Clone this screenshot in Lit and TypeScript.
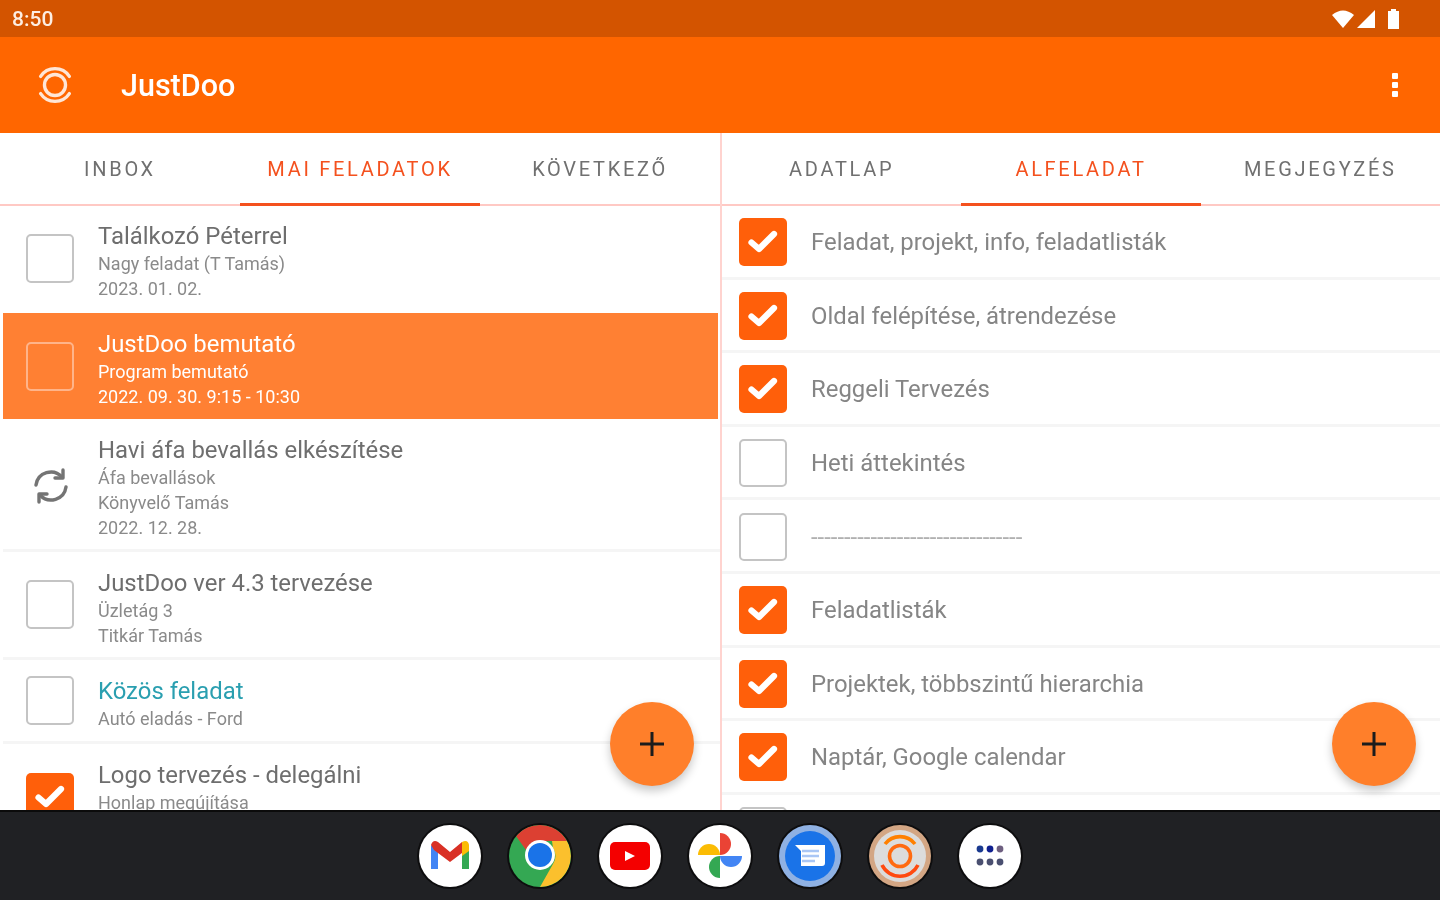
import { LitElement, html, css, svg } from "lit";
import { customElement } from "lit/decorators.js";

type Left = { title: string; lines: string[]; h: number; kind: "empty" | "sync" | "checked"; sel?: boolean; teal?: boolean };

const LEFT: Left[] = [
  { title: "Találkozó Péterrel", lines: ["Nagy feladat (T Tamás)", "2023. 01. 02."], h: 107, kind: "empty" },
  { title: "JustDoo bemutató", lines: ["Program bemutató", "2022. 09. 30. 9:15 - 10:30"], h: 106, kind: "empty", sel: true },
  { title: "Havi áfa bevallás elkészítése", lines: ["Áfa bevallások", "Könyvelő Tamás", "2022. 12. 28."], h: 133, kind: "sync" },
  { title: "JustDoo ver 4.3 tervezése", lines: ["Üzletág 3", "Titkár Tamás"], h: 108, kind: "empty" },
  { title: "Közös feladat", lines: ["Autó eladás - Ford"], h: 84, kind: "empty", teal: true },
  { title: "Logo tervezés - delegálni", lines: ["Honlap megújítása", "\u00a0"], h: 108, kind: "checked" },
];

const RIGHT: { t: string; c: boolean; dash?: boolean }[] = [
  { t: "Feladat, projekt, info, feladatlisták", c: true },
  { t: "Oldal felépítése, átrendezése", c: true },
  { t: "Reggeli Tervezés", c: true },
  { t: "Heti áttekintés", c: false },
  { t: "--------------------------------", c: false, dash: true },
  { t: "Feladatlisták", c: true },
  { t: "Projektek, többszintű hierarchia", c: true },
  { t: "Naptár, Google calendar", c: true },
  { t: "", c: false },
];

const checkMark = svg`<path d="M12.5 24.5 L20 31 L35 16" fill="none" stroke="#fff" stroke-width="6.2" stroke-linecap="round" stroke-linejoin="round"/>`;

const plus = svg`<path d="M14 2V26M2 14H26" stroke="#1c1c1c" stroke-width="3"/>`;

@customElement("app-root")
export class AppRoot extends LitElement {
  static styles = css`
    :host { display: flex; flex-direction: column; width: 1440px; height: 900px; overflow: hidden; background: #fff; font-family: Roboto, "Liberation Sans", sans-serif; color: #6f6f6f; filter: blur(0.6px); }
    .status { height: 37px; flex: none; background: #d35400; display: flex; align-items: center; justify-content: space-between; padding: 0 40px 0 12px; color: #fdeee2; font-size: 21px; font-weight: 500; }
    .status-icons { display: flex; align-items: center; gap: 1px; }
    .battery { margin-left: 10px; }
    .appbar { height: 96px; flex: none; background: #ff6600; display: flex; align-items: center; color: #fff; padding: 0 42px 0 32px; }
    .appbar .logo { width: 46px; height: 46px; }
    .appbar .name { margin-left: 43px; font-size: 30.5px; font-weight: 500; flex: 1; }
    .dots { display: flex; flex-direction: column; gap: 3.5px; }
    .dots i { width: 6px; height: 5.5px; background: #fff; border-radius: 1px; }
    .main { flex: 1; min-height: 0; display: grid; grid-template-columns: 720px 720px; position: relative; }
    .pane { position: relative; overflow: hidden; display: flex; flex-direction: column; }
    .pane.right { border-left: 2px solid #ffd3cf; }
    .tabs { display: flex; height: 73px; flex: none; border-bottom: 2px solid #ffc9c4; box-sizing: border-box; }
    .tab { flex: 1; display: flex; align-items: center; justify-content: center; font-size: 20px; letter-spacing: 2.7px; color: #707070; margin-bottom: -2px; border-bottom: 3px solid transparent; box-sizing: border-box; padding-top: 2px; }
    .tab.on { color: #f4511e; border-bottom-color: #f4511e; }
    .left-row { display: flex; align-items: center; flex: none; box-sizing: border-box; border-bottom: 3px solid #f5f5f5; margin-left: 3px; }
    .left-row:has(+ .sel) { border-bottom-color: transparent; }
    .left-row.sel { background: #ff8033; color: #fff; border-bottom: 0; margin-right: 2px; }
    .left-row.sel .sub, .left-row.sel .title { color: #fff; }
    .left-row.sel .box { border-color: #ffb48a; }
    .mark { width: 48px; height: 48px; margin-left: 23px; flex: none; display: flex; align-items: center; justify-content: center; }
    .left-row .box { height: 49px; }
    .left-row .box.checked { height: 48px; }
    .box { width: 48px; height: 48px; flex: none; box-sizing: border-box; border: 2px solid #c4c4c4; border-radius: 5px; }
    .box.checked { background: #ff5f0a; border: 0; }
    .box svg { display: block; width: 48px; height: 48px; }
    .sync { margin: 4px 0 0 2px; }
    .body { margin-left: 24px; padding-top: 6px; display: flex; flex-direction: column; }
    .title { font-size: 23.9px; line-height: 30px; color: #6e6e6e; }
    .title.teal { color: #2a9fb0; }
    .sub { font-size: 18px; line-height: 25px; color: #8a8a8a; }
    .right-row { height: 73.6px; flex: none; display: flex; align-items: center; box-sizing: border-box; border-bottom: 3px solid #f5f5f5; padding: 2px 0 0 17px; }
    .right-row span { margin-left: 24px; font-size: 23.9px; color: #858585; }
    .right-row span.dash { color: #b0b0b0; }
    .right-row .mark { margin-left: 0; }
    .fab { position: absolute; top: 569px; width: 84px; height: 84px; border-radius: 50%; background: #ff7f2a; box-shadow: 0 5px 10px rgba(0,0,0,.22); display: flex; align-items: center; justify-content: center; }
    .fab svg { width: 28px; height: 28px; }
    .fab.a { left: 610px; }
    .fab.b { left: 1332px; }
    .dock { height: 90px; flex: none; background: #202124; border-top: 2px solid #0b0b0b; box-sizing: border-box; display: flex; align-items: center; justify-content: center; gap: 28px; }
    .app { width: 62px; height: 62px; border-radius: 50%; flex: none; background: #fff; box-shadow: 0 0 0 2px #0d0d0e; display: block; }
  `;

  private box(kind: string) {
    if (kind === "sync")
      return html`<svg class="sync" width="36" height="36" viewBox="0 0 36 36" fill="none" stroke="#747474" stroke-width="3.4" stroke-linecap="round" stroke-linejoin="round"><path d="M3 17A15 15 0 0 1 29 9"/><path d="M30 2V10H22"/><path d="M33 19A15 15 0 0 1 7 27"/><path d="M6 34V26H14"/></svg>`;
    if (kind === "checked") return html`<div class="box checked"><svg viewBox="0 0 48 48">${checkMark}</svg></div>`;
    return html`<div class="box"></div>`;
  }

  private tabs(names: string[]) {
    return html`<div class="tabs">${names.map((n, i) => html`<div class="tab ${i === 1 ? "on" : ""}">${n}</div>`)}</div>`;
  }

  render() {
    return html`
      <div class="status">
        <span>8:50</span>
        <div class="status-icons">
          <svg width="24" height="20" viewBox="0 0 24 20"><path d="M1 6 Q12 -3 23 6 L12 19Z" fill="#fff"/></svg>
          <svg width="20" height="20" viewBox="0 0 20 20"><path d="M19 1V19H1Z" fill="#fff"/></svg>
          <svg class="battery" width="13" height="22" viewBox="0 0 13 22"><path d="M4 1h5v2h3v18H1V3h3z" fill="#fff"/></svg>
        </div>
      </div>
      <div class="appbar">
        <svg class="logo" viewBox="0 0 48 48">
          <path d="M9 15 A18 18 0 0 1 39 15" fill="none" stroke="#ffe6d6" stroke-width="3.5" stroke-linecap="round"/>
          <path d="M9 33 A18 18 0 0 0 39 33" fill="none" stroke="#ffe6d6" stroke-width="3.5" stroke-linecap="round"/>
          <circle cx="24" cy="24" r="11" fill="none" stroke="#ffe6d6" stroke-width="3.5"/>
        </svg>
        <div class="name">JustDoo</div>
        <div class="dots"><i></i><i></i><i></i></div>
      </div>
      <div class="main">
        <section class="pane">
          ${this.tabs(["INBOX", "MAI FELADATOK", "KÖVETKEZŐ"])}
          ${LEFT.map((r) => html`
            <div class="left-row ${r.sel ? "sel" : ""}" style="height:${r.h}px">
              <div class="mark">${this.box(r.kind)}</div>
              <div class="body">
                <div class="title ${r.teal ? "teal" : ""}">${r.title}</div>
                ${r.lines.map((l) => html`<div class="sub">${l}</div>`)}
              </div>
            </div>`)}
        </section>
        <section class="pane right">
          ${this.tabs(["ADATLAP", "ALFELADAT", "MEGJEGYZÉS"])}
          ${RIGHT.map((r) => html`
            <div class="right-row">
              <div class="mark">${this.box(r.c ? "checked" : "empty")}</div>
              <span class="${r.dash ? "dash" : ""}">${r.t}</span>
            </div>`)}
        </section>
        <div class="fab a"><svg viewBox="0 0 28 28">${plus}</svg></div>
        <div class="fab b"><svg viewBox="0 0 28 28">${plus}</svg></div>
      </div>
      <div class="dock">
        <svg class="app" viewBox="0 0 62 62">
          <path d="M12 20 V44 H19 V27Z" fill="#4285f4"/><path d="M50 20 V44 H43 V27Z" fill="#34a853"/>
          <path d="M12 20 Q14 14 19 17 L31 27 L43 17 L47 25 L31 37 L15 25Z" fill="#d93025"/>
          <path d="M43 17 Q49 14 50 20 V26 L43 31Z" fill="#fbbc04"/>
        </svg>
        <svg class="app" style="background:#34a853" viewBox="0 0 62 62">
          <path d="M31 0A31 31 0 0 1 58 16H31A15 15 0 0 0 17 25L7 11A31 31 0 0 1 31 0Z" fill="#dc4032"/>
          <path d="M58 16A31 31 0 0 1 31 62L44 39A15 15 0 0 0 44 23L43 16Z" fill="#fbc02d"/>
          <circle cx="31" cy="30" r="15" fill="#fff"/><circle cx="31" cy="30" r="12" fill="#1a73e8"/>
        </svg>
        <svg class="app" viewBox="0 0 62 62">
          <rect x="11" y="17" width="40" height="28" rx="5" fill="#f40000"/><path d="M26 26L36 31L26 36Z" fill="#fff"/>
        </svg>
        <svg class="app" viewBox="0 0 62 62">
          <path d="M31 30A11 11 0 0 0 9 30Z" fill="#fbbc04"/>
          <path d="M31 30A11 11 0 0 1 31 8Z" fill="#ea4335" transform="rotate(180 31 19)"/>
          <path d="M31 31A11 11 0 0 1 53 31Z" fill="#4285f4" transform="rotate(180 42 31)"/>
          <path d="M31 31A11 11 0 0 1 31 53Z" fill="#34a853" transform="rotate(180 31 42)"/>
        </svg>
        <svg class="app" style="background:#8fb1e3" viewBox="0 0 62 62">
          <circle cx="31" cy="31" r="25" fill="#1a73e8"/>
          <path d="M16 20H46V38Q46 41 43 41H22V26Z" fill="#fff"/>
          <path d="M23 26H40M23 31H40M23 36H36" stroke="#a9c6f5" stroke-width="2.4"/>
        </svg>
        <svg class="app" style="background:#d3a684" viewBox="0 0 62 62">
          <circle cx="31" cy="31" r="26" fill="#dcdcdc"/>
          <path d="M16 19 A19 19 0 0 1 46 19" fill="none" stroke="#ff8000" stroke-width="3.6"/>
          <path d="M13 40 A20 20 0 0 0 49 40" fill="none" stroke="#ff4a10" stroke-width="3.6"/>
          <circle cx="31" cy="31" r="10.5" fill="none" stroke="#ff6a10" stroke-width="3.6"/>
        </svg>
        <svg class="app" viewBox="0 0 62 62">
          <circle cx="21" cy="24" r="3.4" fill="#1a3a8f"/><circle cx="31" cy="24" r="3.4" fill="#10208f"/><circle cx="41" cy="24" r="3.4" fill="#6e5f80"/>
          <circle cx="21" cy="37" r="3.4" fill="#4a4f70"/><circle cx="31" cy="37" r="3.4" fill="#4a4f70"/><circle cx="41" cy="37" r="3.4" fill="#4a4f70"/>
        </svg>
      </div>
    `;
  }
}
